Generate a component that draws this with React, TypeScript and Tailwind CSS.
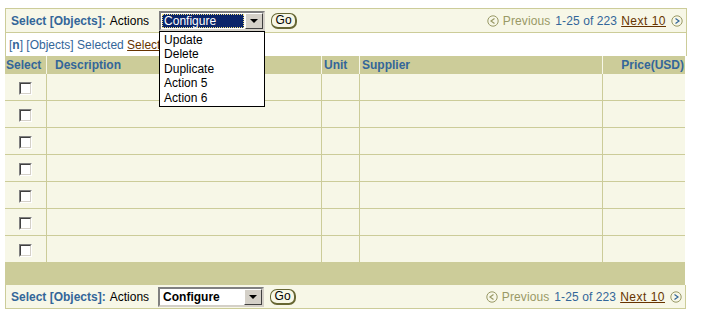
import React from "react";

const BLUE = "text-[#336699]";

function Checkbox() {
  return (
    <div className="mt-[3px] h-[13px] w-[13px] border border-t-[#808080] border-l-[#808080] border-r-white border-b-white">
      <div className="h-full w-full border border-t-[#404040] border-l-[#404040] border-r-[#d4d0c8] border-b-[#d4d0c8] bg-white" />
    </div>
  );
}

function GoButton() {
  return (
    <button className="flex h-[16px] w-[26px] items-center justify-center rounded-[7px] border border-[#666633] border-b-2 border-r-2 bg-[#f7f7e7] text-[12px] leading-none text-black">
      Go
    </button>
  );
}

function ArrowButton() {
  return (
    <div className="flex h-[16px] w-[18px] items-center justify-center border border-t-white border-l-white border-r-[#404040] border-b-[#404040] bg-[#d4d0c8]">
      <div className="h-0 w-0 border-x-[4px] border-t-[4px] border-x-transparent border-t-black" />
    </div>
  );
}

function CircleArrow({ dir, active }: { dir: "prev" | "next"; active?: boolean }) {
  return (
    <svg width="12" height="12" viewBox="0 0 12 12" className="shrink-0">
      <circle cx="6" cy="6" r="5.2" fill="#f7f7e7" stroke="#999966" strokeWidth="1" />
      <path
        d={dir === "prev" ? "M7.5 3.5 L4 6 L7.5 8.5" : "M4.5 3.5 L8 6 L4.5 8.5"}
        fill="none"
        stroke={active ? "#336699" : "#999966"}
        strokeWidth="1.2"
      />
    </svg>
  );
}

function Toolbar({ open }: { open?: boolean }) {
  return (
    <div className="flex h-full items-center justify-between pl-[5px] pr-[3px]">
      <div className="flex items-center">
        <span className={`font-bold ${BLUE}`}>Select [Objects]:</span>
        <span className="ml-[4px] text-black">Actions</span>
        {open ? (
          <div className="relative ml-[10px] flex h-[20px] w-[106px] items-center border-2 border-t-[#808080] border-l-[#808080] border-r-[#d4d0c8] border-b-[#d4d0c8] bg-white">
            <div className="mx-[1px] flex h-[14px] flex-1 items-center border border-dotted border-[#f0e080] bg-[#0a246a] pl-[1px] text-white">
              Configure
            </div>
            <ArrowButton />
            {/* open option list lies over the row below */}
            <div className="absolute left-[-2px] top-[18px] z-10 flex w-[106px] flex-col border border-black bg-white py-[1px] pl-[4px] text-black">
              {["Update", "Delete", "Duplicate", "Action 5", "Action 6"].map((o) => (
                <div key={o} className="h-[14.6px] leading-[14.6px]">
                  {o}
                </div>
              ))}
            </div>
          </div>
        ) : (
          <div className="ml-[9px] flex h-[20px] w-[106px] items-center border-2 border-t-[#808080] border-l-[#808080] border-r-[#d4d0c8] border-b-[#d4d0c8] bg-white">
            <div className="flex-1 pl-[3px] font-bold text-black">Configure</div>
            <ArrowButton />
          </div>
        )}
        <div className="ml-[6px]">
          <GoButton />
        </div>
      </div>
      <div className="flex items-center">
        <CircleArrow dir="prev" />
        <span className="ml-[4px] tracking-[0.1px] text-[#999966]">Previous</span>
        <span className={`ml-[5px] tracking-[0.1px] ${BLUE}`}>1-25 of 223</span>
        <span className="ml-[4px] tracking-[0.5px] text-[#663300] underline">Next 10</span>
        <span className="ml-[5px]">
          <CircleArrow dir="next" active />
        </span>
      </div>
    </div>
  );
}

const cols = [
  { name: "Select", w: "w-[41px]", align: "text-left pl-[1px]" },
  { name: "Description", w: "w-[275px]", align: "text-left pl-[8px]" },
  { name: "Unit", w: "w-[38px]", align: "text-left pl-[2px]" },
  { name: "Supplier", w: "w-[243px]", align: "text-left pl-[2px]" },
  { name: "Price(USD)", w: "flex-1", align: "text-right pr-[1px]" },
];

export default function App() {
  return (
    <div className="min-h-[331px] bg-white pl-[5px] pt-[8px] font-['Liberation_Sans',Arial,sans-serif] text-[12px] leading-none">
      <div className="w-[682px]">
        <div className="relative z-10 h-[25px] border border-[#cccc99] bg-[#f7f7e7]">
          <Toolbar open />
        </div>
        <div className={`flex h-[23px] items-center border-x border-[#cccc99] pl-[3px] ${BLUE}`}>
          <span>
            [<b>n</b>] [Objects] Selected{" "}
            <span className="text-[#663300] underline">Select All</span>
          </span>
        </div>
        <div className="w-[680px]">
          <div className="flex h-[18px] bg-[#cccc99]">
            {cols.map((c, i) => (
              <div
                key={c.name}
                className={`${c.w} ${c.align} flex h-full items-center font-bold ${BLUE} ${
                  i > 0 ? "border-l border-[#f7f7e7]" : ""
                } ${c.name === "Price(USD)" ? "justify-end" : ""}`}
              >
                {c.name}
              </div>
            ))}
          </div>
          {Array.from({ length: 7 }).map((_, r) => (
            <div key={r} className="flex h-[27px] border-b border-[#cccc99] bg-[#f7f7e7] last:border-b-0">
              {cols.map((c, i) => (
                <div
                  key={c.name}
                  className={`${c.w} flex h-full items-center justify-center ${
                    i > 0 ? "border-l border-[#cccc99]" : ""
                  }`}
                >
                  {i === 0 && <Checkbox />}
                </div>
              ))}
            </div>
          ))}
          <div className="h-[22px] bg-[#cccc99]" />
        </div>
        <div className="h-[24px] w-[681px] border border-t-0 border-[#cccc99] bg-[#f7f7e7]">
          <Toolbar />
        </div>
      </div>
    </div>
  );
}
